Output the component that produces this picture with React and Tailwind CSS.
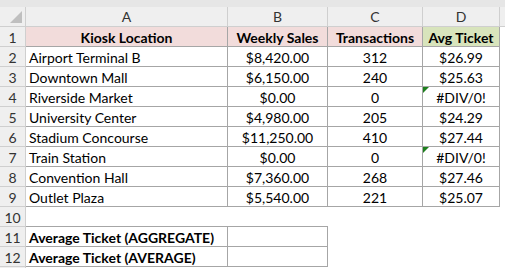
import React from "react";

const rows = [
  ["Airport Terminal B", "$8,420.00", "312", "$26.99"],
  ["Downtown Mall", "$6,150.00", "240", "$25.63"],
  ["Riverside Market", "$0.00", "0", "#DIV/0!", true],
  ["University Center", "$4,980.00", "205", "$24.29"],
  ["Stadium Concourse", "$11,250.00", "410", "$27.44"],
  ["Train Station", "$0.00", "0", "#DIV/0!", true],
  ["Convention Hall", "$7,360.00", "268", "$27.46"],
  ["Outlet Plaza", "$5,540.00", "221", "$25.07"],
];

const HDR = "bg-[#efefef] text-[#333] border-[#cfcfcf]";
const DB = "border-[#a6a6a6]";

function RowHead({ n }) {
  return (
    <div className={`h-[20px] w-[26px] shrink-0 border-r border-b ${HDR} flex items-center justify-center leading-[19px] pt-[1px]`}>
      {n}
    </div>
  );
}

function Cell({ children, w, cls = "", bordered = true, bottomOnly = false }) {
  const b = bordered ? `border-r border-b ${DB}` : bottomOnly ? `border-b ${DB}` : "";
  return (
    <div className={`h-[20px] ${w} shrink-0 ${b} ${cls} relative overflow-visible whitespace-nowrap leading-[19px] pt-[1px]`}>
      {children}
    </div>
  );
}

export default function App() {
  return (
    <div
      className="w-[505px] h-[268px] overflow-hidden bg-white text-[14px] text-black"
      style={{ fontFamily: "Lato, 'Liberation Sans', sans-serif" }}
    >
      <div className="h-[7px] bg-[#e6e6e6]" />
      {/* column headers */}
      <div className="flex h-[20px]">
        <div className={`w-[26px] shrink-0 border-r border-b ${HDR} relative`}>
          <svg className="absolute left-[10px] top-[4px]" width="12" height="12" viewBox="0 0 12 12">
            <polygon points="12,0 12,12 0,12" fill="#bfbfbf" />
          </svg>
        </div>
        <div className={`w-[202px] shrink-0 border-r border-b ${HDR} flex items-center justify-center leading-[19px]`}>A</div>
        <div className={`w-[100px] shrink-0 border-r border-b ${HDR} flex items-center justify-center leading-[19px]`}>B</div>
        <div className={`w-[95px] shrink-0 border-r border-b ${HDR} flex items-center justify-center leading-[19px]`}>C</div>
        <div className={`w-[77px] shrink-0 border-r border-b ${HDR} flex items-center justify-center leading-[19px]`}>D</div>
        <div className={`flex-1 border-b ${HDR}`} />
      </div>
      {/* row 1 */}
      <div className="flex">
        <RowHead n={1} />
        <Cell w="w-[202px]" cls="bg-[#f2dcdb] font-bold text-center">Kiosk Location</Cell>
        <Cell w="w-[100px]" cls="bg-[#f2dcdb] font-bold text-center">Weekly Sales</Cell>
        <Cell w="w-[95px]" cls="bg-[#f2dcdb] font-bold text-center">Transactions</Cell>
        <Cell w="w-[77px]" cls="bg-[#d8e4bc] font-bold text-center">Avg Ticket</Cell>
      </div>
      {rows.map((r, i) => (
        <div className="flex" key={i}>
          <RowHead n={i + 2} />
          <Cell w="w-[202px]" cls="pl-[3px]">{r[0]}</Cell>
          <Cell w="w-[100px]" cls="text-center">{r[1]}</Cell>
          <Cell w="w-[95px]" cls="text-center">{r[2]}</Cell>
          <Cell w="w-[77px]" cls="text-center">
            {r[4] && (
              <svg className="absolute left-0 top-0" width="6" height="6" viewBox="0 0 6 6">
                <polygon points="0,0 6,0 0,6" fill="#1e7f1e" />
              </svg>
            )}
            {r[3]}
          </Cell>
        </div>
      ))}
      {/* row 10 */}
      <div className="flex">
        <RowHead n={10} />
        <Cell w="w-[202px]" bordered={false} bottomOnly />
        <Cell w="w-[100px]" bordered={false} bottomOnly />
      </div>
      <div className="flex">
        <RowHead n={11} />
        <Cell w="w-[202px]" cls="pl-[3px] font-bold">Average Ticket (AGGREGATE)</Cell>
        <Cell w="w-[100px]" />
      </div>
      <div className="flex">
        <RowHead n={12} />
        <Cell w="w-[202px]" cls="pl-[3px] font-bold">Average Ticket (AVERAGE)</Cell>
        <Cell w="w-[100px]" />
      </div>
      <div className="flex">
        <div className={`h-[20px] w-[26px] shrink-0 border-r ${HDR}`} />
      </div>
    </div>
  );
}
